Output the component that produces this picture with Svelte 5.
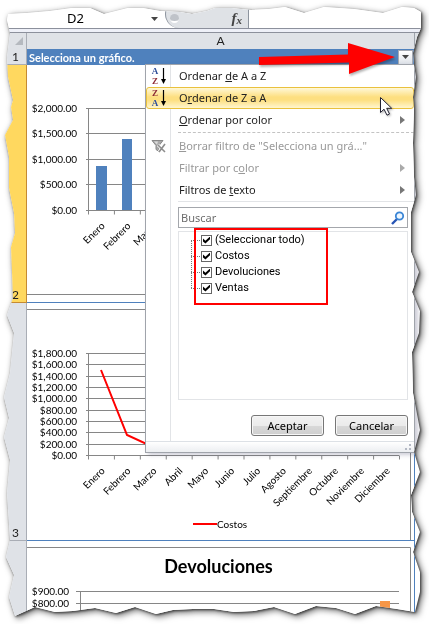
<script>
  const W = 429;
  const H = 624;
  const edge = [
    [8,14],[27,13],[50,11],[72,8],[90,8],[104,14],[128,8],[143,8],[160,11],[180,12],[192,14],[207,11],[215,8],[231,8],[251,10],[269,9],[285,7],[304,13],[324,7],[354,9],[383,13],[402,7],[414,8],[421,12],
    [421,28],[417,37],[413,53],[414,65],[416,77],[413,97],[414,110],[413,143],[414,177],[416,195],[411,212],[411,252],[419,272],[412,292],[420,311],[419,333],[412,352],[413,393],[420,430],[414,452],[420,472],[411,495],[412,512],[420,532],[413,552],[420,572],[420,592],[415,612],
    [397,609],[376,606],[355,614],[336,608],[316,606],[295,614],[274,607],[254,611],[234,612],[214,609],[193,609],[173,610],[156,614],[135,607],[116,613],[95,608],[73,611],[55,612],[35,607],[15,616],
    [9,597],[14,575],[6,557],[10,540],[7,493],[10,460],[4,437],[9,418],[4,397],[10,373],[14,333],[7,315],[13,298],[11,247],[15,233],[14,213],[9,188],[9,157],[5,135],[13,120],[11,107],[13,100],[8,77],[7,57],[10,33],[7,20]
  ];
  // Points past the middle stay attached to the right and bottom sides.
  const px = (v, size) => (v < size / 2 ? `${v}px` : `calc(100% - ${size - v}px)`);
  const torn = `polygon(${edge.map(([x, y]) => `${px(x, W)} ${px(y, H)}`).join(', ')})`;

  const months = ['Enero', 'Febrero', 'Marzo', 'Abril', 'Mayo', 'Junio', 'Julio', 'Agosto', 'Septiembre', 'Octubre', 'Noviembre', 'Diciembre'];
  const step = 311 / 12;
  const sales = ['$2,000.00', '$1,500.00', '$1,000.00', '$500.00', '$0.00'];
  const costs = ['$1,800.00', '$1,600.00', '$1,400.00', '$1,200.00', '$1,000.00', '$800.00', '$600.00', '$400.00', '$200.00', '$0.00'];
  const returns = ['$900.00', '$800.00', '$700.00'];

  let items = $state([
    { name: '(Seleccionar todo)', on: true },
    { name: 'Costos', on: true },
    { name: 'Devoluciones', on: true },
    { name: 'Ventas', on: true }
  ]);
  let cell = $state('D2');
  let query = $state('');
</script>

{#snippet sortIcon(top, bottom)}
  <svg class="icon" width="18" height="20" viewBox="0 0 18 20" aria-hidden="true">
    {#each [top, bottom] as letter, i}
      <text x="5" y={i ? 18 : 8} class="letter" fill={letter === 'A' ? '#2f4f9a' : '#8c2a35'}>{letter}</text>
    {/each}
    <path d="M13.5 2v13" stroke="#000" stroke-width="1.2" />
    <path d="M11 13h5l-2.500 5z" fill="#000" />
  </svg>
{/snippet}

{#snippet arrow()}
  <svg class="more" width="5" height="8" viewBox="0 0 5 8" aria-hidden="true"><path d="M0 0l5 4-5 4z" fill="currentColor" /></svg>
{/snippet}

{#snippet categories(y)}
  {#each months as m, i}
    <path d="M{61.5 + step * (i + 1)} {y}v4" class="grid" />
    <text class="cat" transform="translate({61.500 + step * (i + 0.5) + 4} {y + 16}) rotate(-45)">{m}</text>
  {/each}
  <path d="M61.5 {y}v4" class="grid" />
{/snippet}

<main class="paper">
  <div class="sheet" style:clip-path={torn}>
    <header class="formula">
      <input class="name" aria-label="Cuadro de nombres" bind:value={cell} />
      <svg class="caret" width="7" height="4" viewBox="0 0 7 4" aria-hidden="true"><path d="M0 0h7L3.500 4z" fill="#444" /></svg>
      <div class="tools">
        <span class="knob"></span>
        <button class="fx" aria-label="Insertar función"><i>f</i><sub>x</sub></button>
      </div>
      <input class="bar" aria-label="Barra de fórmulas" />
    </header>
    <div class="seam"></div>

    <div class="row head">
      <div class="num corner"></div>
      <div class="letterhead">A</div>
      <div class="rest"></div>
    </div>
    <div class="row first">
      <div class="num">1</div>
      <div class="selector">
        <span>Selecciona un gráfico.</span>
        <button class="drop" aria-label="Filtro"><svg width="7" height="4" viewBox="0 0 7 4"><path d="M0 0h7L3.500 4z" fill="#444" /></svg></button>
      </div>
      <div></div>
    </div>

    <div class="row body active">
      <div class="num">2</div>
      <div class="cell">
        <svg class="chart" viewBox="0 0 388 237" role="img" aria-label="Ventas">
          {#each sales as s, i}
            <text class="val" x="50" y={47 + Math.round(i * 25.4)}>{s}</text>
            <path class="grid" d="M59 {43.5 + Math.round(i * 25.4)}H372" />
          {/each}
          <path class="grid" d="M61.5 43V145M0 229.5H383.5V0" />
          <path fill="#4f81bd" d="M69 101h11v44h-11zM95 74h10v71h-10z" />
          {@render categories(145.5)}
        </svg>
      </div>
      <div></div>
    </div>
    <div class="row body">
      <div class="num">3</div>
      <div class="cell">
        <svg class="chart" viewBox="0 0 388 237" role="img" aria-label="Costos">
          {#each costs as s, i}
            <text class="val" x="50" y={54 + Math.round(i * 11.35)}>{s}</text>
            <path class="grid" d="M59 {50.5 + Math.round(i * 11.35)}H372" />
          {/each}
          <path class="grid" d="M61.5 50V152M0 6.5H383.5V237" />
          <path d="M74 67L100 132L126 144L152 138" fill="none" stroke="#f00" stroke-width="2" />
          {@render categories(152.5)}
          <path d="M166 221h24" stroke="#f00" stroke-width="2" />
          <text class="legend" x="190" y="225">Costos</text>
        </svg>
      </div>
      <div></div>
    </div>
    <div class="row body last">
      <div class="num"></div>
      <div class="cell">
        <svg class="chart" viewBox="0 0 388 83" role="img" aria-label="Devoluciones">
          <text class="title" x="191.500" y="32">Devoluciones</text>
          {#each returns as s, i}
            <text class="val" x="42" y={54 + i * 12}>{s}</text>
            <path class="grid" d="M49 {50.5 + i * 12}H372" />
          {/each}
          <path class="grid" d="M53.5 50V83M0 6.5H383.5V83" />
          <path fill="#f79646" d="M353 60h10v23h-10z" />
        </svg>
      </div>
      <div></div>
    </div>

    <section class="menu" aria-label="Filtro de columna">
      <div class="commands">
        <button>{@render sortIcon('A', 'Z')}<span>Ordenar <u>d</u>e A a Z</span></button>
        <button class="hot">{@render sortIcon('Z', 'A')}<span>O<u>r</u>denar de Z a A</span></button>
        <button><span class="icon"></span><span><u>O</u>rdenar por color</span>{@render arrow()}</button>
        <hr class="dashed" />
        <button disabled>
          <svg class="icon" width="18" height="16" viewBox="0 0 18 16" aria-hidden="true">
            <path d="M2 2.500h11l-4 5v6l-3-2v-4z" fill="#aaa" stroke="#888" />
            <path d="M4 3.500h4l-1 3z" fill="#ddd" />
            <path d="M8 7l7 7M15 6l-6 8" stroke="#fff" stroke-width="3" />
            <path d="M8 7l7 7M15 6l-6 8" stroke="#8d8d8d" stroke-width="1.600" />
          </svg>
          <span><u>B</u>orrar filtro de "Selecciona un grá..."</span>
        </button>
        <button disabled><span class="icon"></span><span>Filtrar por c<u>o</u>lor</span>{@render arrow()}</button>
        <button><span class="icon"></span><span>Filtros de <u>t</u>exto</span>{@render arrow()}</button>
        <hr />
      </div>
      <div class="panel">
        <label class="search">
          <input placeholder="Buscar" aria-label="Buscar" bind:value={query} />
          <svg width="14" height="14" viewBox="0 0 14 14" aria-hidden="true">
            <path d="M1 13l5-5" stroke="#2755b5" stroke-width="2.400" />
            <circle cx="8.500" cy="5" r="3.700" fill="#eef7ff" stroke="#3b86d6" stroke-width="1.800" />
          </svg>
        </label>
        <div class="list">
          <div class="tree">
            {#each items as item}
              <label><input type="checkbox" bind:checked={item.on} />{item.name}</label>
            {/each}
          </div>
          <div class="mark"></div>
        </div>
        <div class="actions">
          <button>Aceptar</button>
          <button>Cancelar</button>
        </div>
      </div>
      <footer><svg width="7" height="7" viewBox="0 0 7 7" aria-hidden="true"><path d="M4 0h2v2h-2zM0 4h2v2h-2zM4 4h2v2h-2z" fill="#b4b9c4" /></svg></footer>
    </section>

    <svg class="pointer" width="137" height="36" viewBox="0 0 137 36" aria-hidden="true">
      <path d="M0 14L89 11.500V0L136 14L90 31V19.500L0 22z" fill="#f00" />
    </svg>
    <svg class="cursor" width="13" height="20" viewBox="0 0 13 20" aria-hidden="true">
      <path d="M.5.500v15l3.500-3.300 3 6 2.500-1.200-2.800-5.700h5z" fill="#fff" stroke="#223" />
    </svg>
  </div>
</main>

<style>
  :global(body) { margin: 0; background: #fff; }
  * { box-sizing: border-box; }
  button, input { font: inherit; color: inherit; margin: 0; padding: 0; border: 0; background: none; }
  .paper {
    font: 12px/16px "Noto Sans", sans-serif;
    color: #222;
    filter: drop-shadow(1px 1px 1px rgb(0 0 0 / 55%)) drop-shadow(2px 2px 3px rgb(0 0 0 / 60%));
  }
  .sheet { position: relative; background: #fff; }
  .formula { display: flex; align-items: stretch; height: 28px; background: #fff; }
  .name { width: 151px; padding: 8px 0 0; text-align: center; color: #000; font: 13px/16px "Noto Sans", sans-serif; }
  .caret { margin-top: 17px; }
  .tools { display: flex; width: 84px; margin-left: 7px; padding: 8px 6px 0 4px; justify-content: space-between; align-items: center; background: #dfe2e6; border: 1px solid #8d949e; border-width: 0 1px 0 1px; border-radius: 14px 0 0 14px; }
  .knob { width: 9px; height: 9px; border-radius: 5px; background: #bfc3c9; border-bottom: 2px solid #fff; }
  .fx { font: bold 15px/16px "Liberation Serif", serif; color: #444; }
  .fx sub { font-size: 11px; line-height: 1px; font-style: italic; vertical-align: -1px; }
  .bar { flex: 1; min-width: 0; padding: 9px 4px 0; }
  .seam { height: 5px; background: #eef0f8; border: 1px solid #8c909c; border-width: 1px 0; }
  .row { display: grid; grid-template-columns: 27px minmax(0, 1fr) 14px; }
  .num { display: flex; align-items: flex-end; padding-left: 12px; background: #dfe2e7; border-right: 1px solid #a9adb5; border-bottom: 1px solid #a9adb5; font: 12px/14px "Lato", sans-serif; }
  .head { height: 16px; }
  .head > div { background: #dfe2e7; border-bottom: 1px solid #9ea3ab; }
  .corner::after { content: ""; width: 8px; height: 8px; margin: 0 0 4px 3px; background: #b5b9bf; clip-path: polygon(100% 0, 100% 100%, 0 100%); }
  .letterhead { border-right: 1px solid #9ea3ab; text-align: center; font: 12px/16px "Lato", sans-serif; }
  .first { height: 16px; }
  .selector { display: flex; justify-content: space-between; align-items: center; padding: 0 2px; background: #4f81bd; color: #fff; font: bold 11px/15px "Lato", sans-serif; }
  .drop { display: flex; align-items: center; justify-content: center; width: 15px; height: 15px; background: linear-gradient(#fff, #dfe3e9); border: 1px solid #a3a9b3; }
  .body { height: 238px; }
  .body .cell { border-right: 1px solid #4f81bd; border-bottom: 1px solid #4f81bd; background: #fff; overflow: hidden; }
  .active .num { background: #ffd85f; border-color: #c58a32; }
  .last { height: 83px; }
  .chart { display: block; width: 388px; width: calc(100% + 1px); font: 11px "Lato", sans-serif; }
  .grid { stroke: #868686; fill: none; }
  .val { text-anchor: end; fill: #000; font-size: 10px; }
  .cat { text-anchor: end; fill: #000; font-size: 10px; }
  .legend { fill: #000; font-size: 10px; }
  .title { text-anchor: middle; font: bold 18px "Lato", sans-serif; fill: #000; }

  .menu {
    position: absolute; left: 145px; right: 14px; top: 64px;
    border: 1px solid #a0a4ab;
    background: linear-gradient(#e2e4e7, #e2e4e7) 24px 0 / 1px 100% no-repeat #fff;
    box-shadow: 3px 2px 4px rgb(60 60 100 / 25%);
  }
  .commands button { display: flex; align-items: center; width: 100%; height: 22px; padding: 0 8px 0 3px; border: 1px solid transparent; border-radius: 3px; text-align: left; white-space: nowrap; font: 11px/16px "Noto Sans", sans-serif; }
  .commands button:disabled { color: #999; }
  .commands .hot { border-color: #e9c13d; background: linear-gradient(#fff8d8, #fddf80 45%, #fddf80 60%, #fff6cf); }
  .icon { width: 18px; margin-right: 11px; flex: none; }
  .letter { font: bold 9px "Liberation Serif", serif; text-anchor: middle; }
  .more { margin-left: auto; color: #777; }
  :disabled .more { color: #aaa; }
  hr { height: 1px; margin: 0 0 0 32px; border: 0; background: #e2e4e7; }
  hr.dashed { margin: 1px 0 2px 32px; background: none; border-top: 1px dashed #c3c3c3; }
  .panel { padding: 5px 6px 5px 32px; }
  .search { display: flex; align-items: center; height: 21px; padding: 0 2px; border: 1px solid #a4a7ac; }
  .search input { flex: 1; min-width: 0; height: 19px; outline: 0; font-size: 11px; }
  .search input::placeholder { color: #6d6d6d; opacity: 1; }
  .list { position: relative; height: 169px; margin-top: 3px; border: 1px solid #e2e4e7; }
  .tree { position: relative; padding-left: 12px; }
  .tree::before { content: ""; position: absolute; left: 12px; top: 8px; height: 48px; border-left: 1px dotted #777; }
  .tree label { display: flex; align-items: center; height: 16px; color: #000; font: 11px/16px "Roboto", sans-serif; }
  .tree label::before { content: ""; width: 9px; border-top: 1px dotted #777; }
  .tree input { appearance: none; display: grid; place-items: center; width: 11px; height: 11px; margin: 0 3px 0 1px; border: 1px solid #666; background: #fff; }
  .tree input:checked::before { content: ""; width: 7px; height: 7px; background: #000; clip-path: polygon(0 30%, 35% 60%, 100% 0, 100% 38%, 35% 100%, 0 70%); }
  .mark { position: absolute; left: 15px; top: -4px; width: 134px; height: 77px; border: 2px solid #f00; pointer-events: none; }
  .actions { display: flex; justify-content: flex-end; gap: 11px; margin-top: 15px; }
  .actions button { width: 73px; height: 21px; border: 1px solid #777; border-radius: 3px; background: linear-gradient(#f2f2f2, #ebebeb 50%, #d9d9d9 50%, #cfcfcf); color: #000; font: 11px/18px "Noto Sans", sans-serif; box-shadow: inset 0 0 0 1px #f7f7f7; }
  footer { display: flex; justify-content: flex-end; align-items: center; height: 11px; padding-right: 2px; border-top: 1px solid #dde1e6; background: linear-gradient(#fff, #eceef1); }
  .pointer { position: absolute; right: 33px; top: 43px; filter: drop-shadow(1px 2px 1px rgb(0 0 0 / 30%)); }
  .cursor { position: absolute; right: 36px; top: 97px; filter: drop-shadow(1px 1px 1px rgb(0 0 0 / 30%)); }
</style>
